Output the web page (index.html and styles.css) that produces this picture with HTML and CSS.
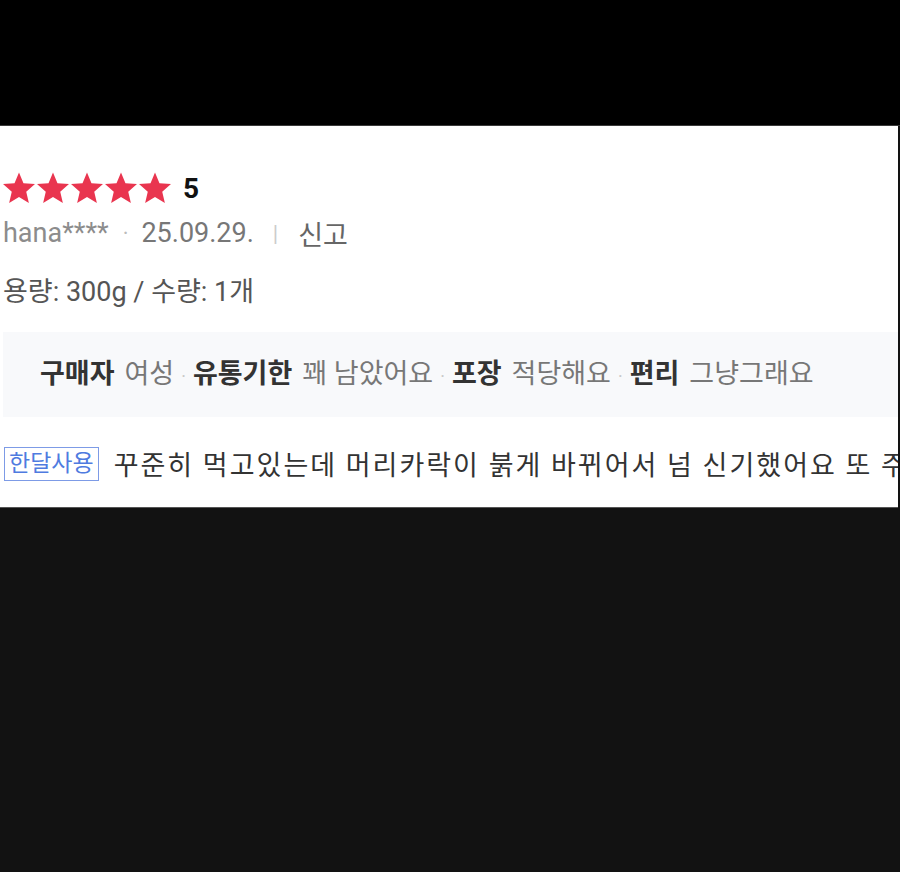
FILE: index.html
```html
<!DOCTYPE html>
<html lang="ko">
<head>
    <meta charset="UTF-8">
    <meta name="viewport" content="width=device-width, initial-scale=1.0">
    <title>리뷰</title>
    <link rel="stylesheet" href="styles.css">
</head>
<body>
    <div class="top-band"></div>

    <div class="review">
        <!-- Rating -->
        <div class="rating">
            <div class="stars">
                <svg class="star" viewBox="0 0 32 32"><polygon points="16,0.5 20.47,11.15 31.98,12.11 23.23,19.65 25.87,30.89 16,24.9 6.13,30.89 8.77,19.65 0.02,12.11 11.53,11.15"/></svg>
                <svg class="star" viewBox="0 0 32 32"><polygon points="16,0.5 20.47,11.15 31.98,12.11 23.23,19.65 25.87,30.89 16,24.9 6.13,30.89 8.77,19.65 0.02,12.11 11.53,11.15"/></svg>
                <svg class="star" viewBox="0 0 32 32"><polygon points="16,0.5 20.47,11.15 31.98,12.11 23.23,19.65 25.87,30.89 16,24.9 6.13,30.89 8.77,19.65 0.02,12.11 11.53,11.15"/></svg>
                <svg class="star" viewBox="0 0 32 32"><polygon points="16,0.5 20.47,11.15 31.98,12.11 23.23,19.65 25.87,30.89 16,24.9 6.13,30.89 8.77,19.65 0.02,12.11 11.53,11.15"/></svg>
                <svg class="star" viewBox="0 0 32 32"><polygon points="16,0.5 20.47,11.15 31.98,12.11 23.23,19.65 25.87,30.89 16,24.9 6.13,30.89 8.77,19.65 0.02,12.11 11.53,11.15"/></svg>
            </div>
            <span class="score">5</span>
        </div>

        <!-- Writer / date -->
        <div class="meta">
            <span class="user">hana****</span>
            <span class="dot">·</span>
            <span class="date">25.09.29.</span>
            <span class="bar">|</span>
            <span class="report">신고</span>
        </div>

        <div class="option">용량: 300g / 수량: 1개</div>

        <!-- Survey answers -->
        <div class="survey">
            <span class="label">구매자</span><span class="value">여성</span><span class="sep">·</span><span class="label">유통기한</span><span class="value">꽤 남았어요</span><span class="sep">·</span><span class="label">포장</span><span class="value">적당해요</span><span class="sep">·</span><span class="label">편리</span><span class="value">그냥그래요</span>
        </div>

        <div class="content">
            <span class="tag">한달사용</span>
            <p class="text">꾸준히 먹고있는데 머리카락이 붉게 바뀌어서 넘 신기했어요 또 주문할게요</p>
        </div>
    </div>
</body>
</html>
```

FILE: styles.css
```css
:root {
    --star-color: #e9354f;
    --text-dark: #222;
    --text-gray: #808080;
    --tag-blue: #4f7be0;
}

html {
    background-color: #121212;
}

body {
    margin: 0;
    font-family: Roboto, "Noto Sans CJK KR", sans-serif;
    font-size: 27px;
    color: var(--text-dark);
}

.top-band {
    height: 125px;
    background-color: #000;
    border-bottom: 1px solid #3a3a3a;
}

.review {
    width: 898px;
    background-color: #fff;
    padding: 46px 0 24px 3px;
    box-sizing: border-box;
    overflow: hidden;
    border-bottom: 1px solid #555;
}

.rating {
    display: flex;
    align-items: center;
    height: 32px;
}

.stars {
    display: flex;
    gap: 2px;
}

.star {
    width: 32px;
    height: 32px;
    fill: var(--star-color);
}

.score {
    margin-left: 12px;
    font-weight: 700;
    font-size: 28px;
    color: #111;
}

.meta {
    display: flex;
    align-items: center;
    margin-top: 11px;
    height: 36px;
    color: var(--text-gray);
}

.user {
    color: #8c8c8c;
}

.dot {
    margin: 0 13px 0 14px;
    color: #bbb;
    font-size: 22px;
}

.date {
    color: #777;
}

.bar {
    margin: 0 20px 0 19px;
    color: #ccc;
    font-size: 22px;
}

.report {
    color: #666;
}

.option {
    margin-top: 23px;
    height: 36px;
    line-height: 36px;
    color: #555;
}

.survey {
    margin-top: 22px;
    height: 85px;
    line-height: 85px;
    padding-left: 37px;
    background-color: #f8f9fb;
    white-space: nowrap;
}

.survey .label {
    font-weight: 700;
    color: #333;
    margin-right: 10px;
}

.survey .value {
    color: #777;
}

.survey .sep {
    color: #c8c8c8;
    font-size: 18px;
    margin: 0 7px;
}

.content {
    display: flex;
    align-items: center;
    margin-top: 27px;
    white-space: nowrap;
}

.tag {
    flex-shrink: 0;
    margin-left: 1px;
    padding: 0 4px;
    height: 32px;
    line-height: 32px;
    border: 1px solid #7d9be6;
    color: var(--tag-blue);
    font-size: 23px;
}

.text {
    margin: 0 0 0 15px;
    color: #333;
    letter-spacing: 2px;
}
```
